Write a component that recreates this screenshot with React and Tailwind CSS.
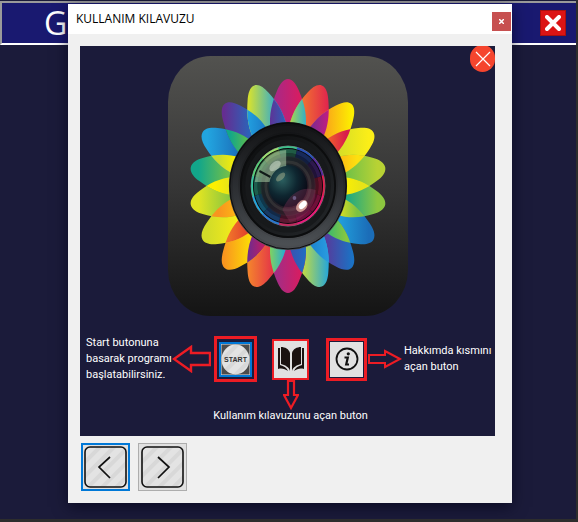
import React from "react";

const PETAL =
  "M0,-107 C5,-107 9,-102 12,-95 C17,-84 21,-72 19,-56 L0,-10 L-19,-56 C-21,-72 -17,-84 -12,-95 C-9,-102 -5,-107 0,-107 Z";

// [left colour, right colour, overlap with the next petal: left, right]
const PETALS = [
  ["#a22a8c", "#e01a5a", "#a8d84c", "#22a8d8"],
  ["#f4822a", "#e0204f", "#7a2a90", "#c41c80"],
  ["#f9941f", "#fdf000", "#f0602a", "#d81c4c"],
  ["#d2dc28", "#fbee18", "#fdb813", "#fde010"],
  ["#6cc048", "#b8d234", "#fdf000", "#e8e416"],
  ["#12a68a", "#8cc63f", "#dde022", "#7cc242"],
  ["#22a5e0", "#1b6db8", "#3cb86c", "#86c840"],
  ["#652d91", "#1b72c4", "#1b84d0", "#2a9ce0"],
  ["#e4e622", "#1ea4e0", "#3a50b0", "#1b72c4"],
  ["#98308e", "#e01a5a", "#8cd850", "#22a8d8"],
  ["#f58a2a", "#e0204f", "#6a2c91", "#c41c60"],
  ["#f9941f", "#fdee00", "#f0702a", "#e0402c"],
  ["#d2dc28", "#fbee18", "#f9941f", "#fdb813"],
  ["#e0e422", "#84c441", "#fdf000", "#e0e020"],
  ["#12a68a", "#7cc242", "#c8dc30", "#fdf000"],
  ["#22a5e0", "#1b6db8", "#12a68a", "#5cbc4c"],
  ["#652d91", "#1b72c4", "#22a0e0", "#1b7cc8"],
  ["#e4e622", "#1ea4e0", "#652d91", "#2c60b8"],
];

const RING = [
  ["#9fe070", 330],
  ["#3ec08c", 0],
  ["#2a52b8", 30],
  ["#5a2ca0", 60],
  ["#e0204f", 90],
  ["#f01870", 120],
  ["#e81c7c", 150],
  ["#c02c60", 180],
  ["#2a78d0", 210],
  ["#22a8e0", 240],
  ["#38c8a0", 270],
  ["#58d078", 300],
];

function Petals() {
  return (
    <>
      {PETALS.map(([from, to], i) => {
        const a = (i * 20 * Math.PI) / 180;
        const c = Math.cos(a);
        const s = Math.sin(a);
        return (
          <g key={i} transform={`rotate(${i * 20})`}>
            <linearGradient id={`petal${i}`} gradientUnits="userSpaceOnUse" x1={-18 * c} y1={-80 + 18 * s} x2={18 * c} y2={-80 - 18 * s}>
              <stop offset="0" stopColor={from} />
              <stop offset="1" stopColor={to} />
            </linearGradient>
            <path d={PETAL} fill={`url(#petal${i})`} />
          </g>
        );
      })}
      {PETALS.map(([, , mixFrom, mixTo], i) => {
        const a = (i * 20 * Math.PI) / 180;
        const c = Math.cos(a);
        const s = Math.sin(a);
        return (
          <g key={i} transform={`rotate(${i * 20})`}>
            <linearGradient id={`mix${i}`} gradientUnits="userSpaceOnUse" x1={12 - 10 * c} y1={-68 + 10 * s} x2={12 + 10 * c} y2={-68 - 10 * s}>
              <stop offset="0" stopColor={mixFrom} />
              <stop offset="1" stopColor={mixTo} />
            </linearGradient>
            <path d={PETAL} fill={`url(#mix${i})`} clipPath="url(#nextPetal)" />
          </g>
        );
      })}
    </>
  );
}

function Lens() {
  return (
    <g>
      <circle r="64" fill="url(#barrel)" />
      <circle r="63" fill="none" stroke="#08090a" strokeWidth="1" />
      <circle r="57" fill="none" stroke="url(#rim)" strokeWidth="6" />
      <circle r="52" fill="url(#inner)" />
      <circle r="51" fill="none" stroke="#0c0d0e" strokeWidth="2" />
      <circle r="44" fill="none" stroke="#17191b" strokeWidth="5" />
      <circle r="40" fill="#08080c" stroke="#74787c" strokeWidth="1" />
      {RING.map(([color, angle]) => (
        <g key={angle} transform={`rotate(${angle})`} fill="none" stroke={color}>
          <path d="M-10.5,-37.5 A39,39 0 0 1 10.5,-37.5" strokeWidth="2" />
          <path d="M-9,-33.8 A35,35 0 0 1 9,-33.8" strokeWidth="4" opacity="0.45" />
          <path d="M-8,-29.9 A31,31 0 0 1 8,-29.9" strokeWidth="4" opacity="0.3" />
        </g>
      ))}
      <circle r="30" fill="url(#glassTint)" opacity="0.8" />
      <circle r="24" fill="none" stroke="#55524c" strokeWidth="3" opacity="0.35" />
      <circle r="21" fill="url(#iris)" />
      <path d="M-36,-4 A36,36 0 0 1 -2,-36 L-2,-20 A20,20 0 0 0 -20,-4 Z" fill="#b4dcb0" opacity="0.5" />
      <path d="M-31,-15 L-19,-9" stroke="#101a18" strokeWidth="2" />
      <ellipse cx="-14" cy="-20" rx="7" ry="4" transform="rotate(-35 -14 -20)" fill="#f2fff2" opacity="0.4" />
      <ellipse cx="-8" cy="-9" rx="6" ry="3" transform="rotate(-40 -8 -9)" fill="#c8c89c" opacity="0.4" />
      <path d="M-6,24 C2,6 16,0 30,4 C30,20 18,33 2,36 Z" fill="#9c3c68" opacity="0.3" />
      <ellipse cx="15" cy="20" rx="7" ry="5" transform="rotate(-40 15 20)" fill="#e8b0a4" opacity="0.8" />
      <ellipse cx="16" cy="19" rx="5" ry="3" transform="rotate(-40 16 19)" fill="#ffffff" />
      <circle cx="7" cy="12" r="2" fill="#8d80b4" opacity="0.6" />
    </g>
  );
}

function CameraLogo() {
  return (
    <svg className="h-[260px] w-[240px] shrink-0" viewBox="-130 -130 260 260" preserveAspectRatio="none" role="img" aria-label="Kamera">
      <defs>
        <linearGradient id="tile" x1="0" y1="0" x2="0" y2="1">
          <stop offset="0" stopColor="#52524f" />
          <stop offset="0.5" stopColor="#363636" />
          <stop offset="1" stopColor="#141414" />
        </linearGradient>
        <linearGradient id="barrel" x1="0" y1="0" x2="0" y2="1">
          <stop offset="0" stopColor="#101113" />
          <stop offset="0.5" stopColor="#26282b" />
          <stop offset="1" stopColor="#4b4e52" />
        </linearGradient>
        <linearGradient id="rim" x1="0" y1="0" x2="0" y2="1">
          <stop offset="0" stopColor="#151618" />
          <stop offset="0.6" stopColor="#303337" />
          <stop offset="1" stopColor="#4b4f53" />
        </linearGradient>
        <linearGradient id="inner" x1="0" y1="0" x2="1" y2="1">
          <stop offset="0" stopColor="#0c0d0e" />
          <stop offset="1" stopColor="#24272a" />
        </linearGradient>
        <linearGradient id="glassTint" x1="0" y1="0" x2="1" y2="1">
          <stop offset="0" stopColor="#243c34" />
          <stop offset="0.5" stopColor="#20222c" />
          <stop offset="1" stopColor="#5a2434" />
        </linearGradient>
        <radialGradient id="iris" cx="0.35" cy="0.35" r="0.7">
          <stop offset="0" stopColor="#2c6060" />
          <stop offset="0.55" stopColor="#0e2630" />
          <stop offset="1" stopColor="#0a0814" />
        </radialGradient>
        <clipPath id="nextPetal">
          <path d={PETAL} transform="rotate(20)" />
        </clipPath>
      </defs>
      <rect x="-130" y="-130" width="260" height="260" rx="46" fill="url(#tile)" />
      <Petals />
      <Lens />
    </svg>
  );
}

function Hatch({ id }) {
  return (
    <pattern id={id} width="10" height="10" patternUnits="userSpaceOnUse" patternTransform="rotate(45)">
      <rect width="10" height="10" fill="#e3e3e3" />
      <rect width="4" height="10" fill="#d8d8d8" />
    </pattern>
  );
}

function NavButton({ label, points, active }) {
  return (
    <button
      type="button"
      aria-label={label}
      className={
        active
          ? "flex h-12 w-[49px] items-center justify-center border-2 border-[#0078d7] bg-[#e1e1e1]"
          : "flex h-12 w-[49px] items-center justify-center border border-[#adadad] bg-[#e1e1e1]"
      }
    >
      <svg className="h-[42px] w-[43px] shrink-0" viewBox="0 0 43 42">
        <defs>
          <Hatch id={label} />
        </defs>
        <rect x="1" y="1" width="41" height="40" rx="5" fill={`url(#${label})`} stroke="#111" strokeWidth="1.6" />
        <polyline points={points} fill="none" stroke="#111" strokeWidth="1.7" />
      </svg>
    </button>
  );
}

function ArrowLeft() {
  return (
    <svg className="h-7 w-[39px] shrink-0" viewBox="0 0 39 28">
      <path d="M2,14 L19,2 V8 H38 V20 H19 V26 Z" fill="none" stroke="#ed1c24" strokeWidth="2.4" />
    </svg>
  );
}

function ArrowRight() {
  return (
    <svg className="h-5 w-[34px] shrink-0" viewBox="0 0 34 20">
      <path d="M32,10 L17,2 V6 H1 V14 H17 V18 Z" fill="none" stroke="#ed1c24" strokeWidth="2" />
    </svg>
  );
}

function ArrowDown() {
  return (
    <svg className="h-[30px] w-4" viewBox="0 0 16 30">
      <path d="M8,28 L15,15 H11 V1 H5 V15 H1 Z" fill="none" stroke="#ed1c24" strokeWidth="2.2" />
    </svg>
  );
}

function StartIcon() {
  return (
    <svg className="h-[31px] w-[29px]" viewBox="0 0 29 31" role="img" aria-label="Start">
      <defs>
        <Hatch id="startHatch" />
      </defs>
      <rect width="29" height="31" fill="#4c4c4c" stroke="#e1e1e1" />
      <ellipse cx="14.5" cy="15.5" rx="14" ry="15" fill="url(#startHatch)" />
      <text x="14.5" y="18" textAnchor="middle" fontSize="7" fontWeight="900" fontFamily="'Liberation Sans', Arial, sans-serif" fill="#333">
        START
      </text>
    </svg>
  );
}

function BookIcon() {
  return (
    <svg className="h-[26px] w-7" viewBox="0 0 28 26" fill="#1a1210">
      <path d="M4,1 C8,1 12,3 13,7 V25 C12,21 8,19 4,18 Z" />
      <path d="M24,1 C20,1 16,3 15,7 V25 C16,21 20,19 24,18 Z" />
      <path d="M1,2 H3 V19 C7,20 10,22 11,25 C8,23 5,22 1,23 Z" />
      <path d="M27,2 H25 V19 C21,20 18,22 17,25 C20,23 23,22 27,23 Z" />
    </svg>
  );
}

function InfoIcon() {
  return (
    <svg className="h-6 w-6" viewBox="0 0 24 24" fill="none" stroke="#111">
      <circle cx="12" cy="12" r="10.5" strokeWidth="1.8" />
      <circle cx="13.3" cy="6.8" r="1.6" fill="#111" stroke="none" />
      <path d="M9.5,10.5 H12.8 L11.2,17.5 H14" strokeWidth="2.2" />
    </svg>
  );
}

export default function App() {
  return (
    <div className="relative flex h-screen flex-col overflow-hidden border-r-2 border-b-3 border-[#2d2d2d] bg-[#1b1b3a] font-[Roboto,'Noto_Sans',sans-serif]">
      <header className="mt-px flex h-11 items-center justify-between border-t-2 border-b-2 border-l-2 border-t-[#9a9a9a] border-b-white border-l-[#9a9a9a] bg-[#191970] pr-[10px] pl-[42px]">
        <h1 className="font-['Open_Sans','Noto_Sans',sans-serif] text-[32px] leading-10 text-white">G</h1>
        <button type="button" aria-label="Kapat" className="flex h-[26px] w-[26px] items-center justify-center border border-[#a81010] bg-[#dc1414]">
          <svg className="h-4 w-4" viewBox="0 0 16 16">
            <path d="M2,2 L14,14 M14,2 L2,14" stroke="#fff" strokeWidth="4" strokeLinecap="round" />
          </svg>
        </button>
      </header>

      <section role="dialog" aria-labelledby="dialog-title" className="absolute top-1 right-16 left-[68px] bg-[#f0f0f0] shadow-[0_4px_14px_rgba(0,0,20,0.6)]">
        <div className="flex h-[30px] items-center justify-between bg-white pl-2">
          <h2 id="dialog-title" className="font-['Open_Sans','Noto_Sans',sans-serif] text-xs text-black">
            KULLANIM KILAVUZU
          </h2>
          <button type="button" aria-label="Pencereyi kapat" className="mt-1 mr-px flex h-[19px] w-[19px] items-center justify-center bg-[#c75050]">
            <svg className="h-[5px] w-[5px]" viewBox="0 0 5 5">
              <path d="M0,0 L5,5 M5,0 L0,5" stroke="#fff" strokeWidth="1.5" />
            </svg>
          </button>
        </div>

        <div className="pt-3 pr-[17px] pb-3 pl-3">
          <div className="relative flex h-[390px] flex-col items-center overflow-hidden bg-[#1b1b3a] pt-[10px] text-[11px] leading-4 text-white">
            <button type="button" aria-label="Kapat" className="absolute -top-px right-0 flex h-[27px] w-[25px] items-center justify-center rounded-full bg-[#f5452e]">
              <svg className="h-4 w-4" viewBox="0 0 16 16">
                <path d="M1,1 L15,15 M15,1 L1,15" stroke="#fff" strokeWidth="1.2" />
              </svg>
            </button>

            <CameraLogo />

            <div className="mt-5 flex h-[46px] w-full items-center pl-[6px]">
              <p className="w-[86px] whitespace-nowrap">
                Start butonuna
                <br />
                basarak programı
                <br />
                başlatabilirsiniz.
              </p>
              <ArrowLeft />
              <div className="ml-[3px] flex h-[46px] w-[43px] shrink-0 items-center justify-center border-3 border-[#ed1c24]">
                <div className="flex h-[35px] w-[33px] items-center justify-center border-2 border-[#0078d7]">
                  <StartIcon />
                </div>
              </div>
              <div className="ml-[15px] flex h-[41px] w-[37px] shrink-0 items-center justify-center border-2 border-[#ed1c24] bg-[#e1e1e1]">
                <BookIcon />
              </div>
              <div className="ml-[17px] flex h-[43px] w-[41px] shrink-0 items-center justify-center border-3 border-[#ed1c24]">
                <div className="flex h-[35px] w-[33px] items-center justify-center bg-[#e1e1e1]">
                  <InfoIcon />
                </div>
              </div>
              <div className="ml-px flex">
                <ArrowRight />
              </div>
              <p className="ml-[2px] whitespace-nowrap">
                Hakkımda kısmını
                <br />
                açan buton
              </p>
            </div>

            <div className="-mt-[2px] flex flex-col items-center pl-[6px]">
              <ArrowDown />
              <p className="-mt-[2px]">Kullanım kılavuzunu açan buton</p>
            </div>
          </div>

          <div className="mt-[7px] flex gap-2 pl-px">
            <NavButton label="Geri" points="26,11 15,21 26,32" active />
            <NavButton label="İleri" points="17,11 28,21 17,32" />
          </div>
        </div>
      </section>
    </div>
  );
}
